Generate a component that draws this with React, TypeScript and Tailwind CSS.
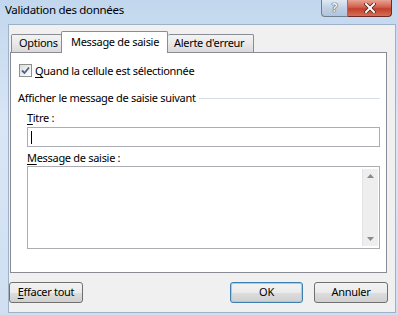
import React from "react";

const font = { fontFamily: '"Noto Sans", "Liberation Sans", sans-serif' };

function Btn({ children, w, def }: { children: React.ReactNode; w: string; def?: boolean }) {
  return (
    <div
      className={`${w} h-[21px] rounded-[3px] border flex items-center justify-center text-[11px] tracking-[-0.3px] text-black whitespace-nowrap ${
        def ? "border-[#3c7fb1] shadow-[inset_0_0_0_1px_#8fd3f5]" : "border-[#707070]"
      } bg-[linear-gradient(to_bottom,#f2f2f2_0%,#ebebeb_50%,#dddddd_51%,#cfcfcf_100%)]`}
    >
      {children}
    </div>
  );
}

export default function App() {
  return (
    <div
      className="w-[398px] h-[315px] overflow-hidden bg-[linear-gradient(to_bottom,#c2d7ee,#d9e6f5_40%,#cfdff1)] flex flex-col"
      style={font}
    >
      {/* Title bar */}
      <div className="h-[24px] flex items-start relative">
        <div className="pl-[5px] pt-[2px] text-[11.5px] tracking-[-0.3px] text-black leading-[16px] whitespace-nowrap">
          Validation des données
        </div>
        <div className="ml-auto mr-[6px] flex">
          <div className="w-[27px] h-[17px] rounded-bl-[4px] border border-t-0 border-[#6f7d91] bg-[linear-gradient(to_bottom,#dfe9f5,#c0d0e4_50%,#b1c4dc)] flex items-center justify-center text-[12px] font-bold text-[#eef3f9] [text-shadow:0_0_1px_#333,0_0_1px_#333]">
            ?
          </div>
          <div className="w-[44px] h-[17px] rounded-br-[4px] border border-t-0 border-l-0 border-[#6e2a26] bg-[linear-gradient(to_bottom,#e8a493,#d25e4c_45%,#c1402c_55%,#d56f54)] flex items-center justify-center">
            <svg width="12" height="10" viewBox="0 0 12 10">
              <path d="M2 1 L10 9 M10 1 L2 9" stroke="#4a1c16" strokeWidth="3.4" strokeLinecap="square" />
              <path d="M2 1 L10 9 M10 1 L2 9" stroke="#ffffff" strokeWidth="2" strokeLinecap="square" />
            </svg>
          </div>
        </div>
      </div>

      {/* Client area */}
      <div className="ml-[8px] w-[388px] h-[289px] border border-[#9fb1c8] bg-[#f0f0f0] flex flex-col">
        {/* Tabs */}
        <div className="mt-[6px] ml-[2px] h-[21px] flex items-end relative z-10 text-[11px] tracking-[-0.3px] text-black whitespace-nowrap">
          <div className="shrink-0 w-[51px] h-[18px] border border-b-0 border-[#898c95] rounded-t-[2px] bg-[linear-gradient(to_bottom,#f3f3f3,#e9e9e9_50%,#d9d9d9)] flex items-center pl-[7px]">
            Options
          </div>
          <div className="shrink-0 w-[107px] h-[22px] -mb-[1px] border border-b-0 border-[#898c95] rounded-t-[2px] bg-white flex items-start pt-[2px] pl-[9px] -ml-[1px]">
            Message de saisie
          </div>
          <div className="shrink-0 w-[86px] h-[18px] border border-b-0 border-l-0 border-[#898c95] rounded-t-[2px] bg-[linear-gradient(to_bottom,#f3f3f3,#e9e9e9_50%,#d9d9d9)] flex items-center pl-[6px]">
            Alerte d'erreur
          </div>
        </div>

        {/* Panel */}
        <div className="ml-[1px] w-[377px] h-[221px] border border-[#898c95] bg-white flex flex-col text-[11px] tracking-[-0.3px] text-black">
          <div className="mt-[11px] ml-[8px] flex items-center h-[13px]">
            <div className="w-[13px] h-[13px] border border-[#8e8f8f] bg-[linear-gradient(135deg,#dcdcdc,#ffffff)] flex items-center justify-center">
              <svg width="9" height="9" viewBox="0 0 9 9">
                <path d="M1 4.5 L3.5 7 L8 1.5" stroke="#4d6185" strokeWidth="1.8" fill="none" />
              </svg>
            </div>
            <span className="ml-[3px] leading-[14px] whitespace-nowrap">
              <span className="underline underline-offset-2">Q</span>uand la cellule est sélectionnée
            </span>
          </div>

          <div className="mt-[13px] ml-[7px] mr-[6px] flex items-center h-[16px]">
            <span className="whitespace-nowrap">Afficher le message de saisie suivant</span>
            <div className="ml-[3px] flex-1 h-px bg-[#d5dfe5]" />
          </div>

          <div className="mt-[4px] ml-[16px] h-[16px] leading-[16px]">
            <span className="underline underline-offset-2">T</span>itre :
          </div>
          <div className="mt-[1px] ml-[16px] w-[353px] h-[20px] border border-[#abadb3] bg-white relative">
            <div className="absolute left-[3px] top-[3px] w-px h-[13px] bg-black" />
          </div>

          <div className="mt-[3px] ml-[16px] h-[16px] leading-[16px]">
            <span className="underline underline-offset-2">M</span>essage de saisie :
          </div>
          <div className="ml-[16px] w-[353px] h-[83px] border border-[#abadb3] bg-white flex justify-end pt-[2px] pr-[1px]">
            <div className="w-[16px] h-[77px] bg-[#eeeeee] border-l border-[#e3e3e3] flex flex-col items-center justify-between py-[5px]">
              <svg width="7" height="4" viewBox="0 0 7 4">
                <path d="M0 4 L3.5 0 L7 4 Z" fill="#8a8a8a" />
              </svg>
              <svg width="7" height="4" viewBox="0 0 7 4">
                <path d="M0 0 L3.5 4 L7 0 Z" fill="#8a8a8a" />
              </svg>
            </div>
          </div>
        </div>

        {/* Buttons */}
        <div className="mt-[9px] flex items-center">
          <Btn w="w-[74px]">
            <span>
              <span className="underline underline-offset-2">E</span>ffacer tout
            </span>
          </Btn>
          <div className="ml-[147px]">
            <Btn w="w-[73px]" def>
              OK
            </Btn>
          </div>
          <div className="ml-[11px]">
            <Btn w="w-[74px]">Annuler</Btn>
          </div>
        </div>
      </div>
    </div>
  );
}
